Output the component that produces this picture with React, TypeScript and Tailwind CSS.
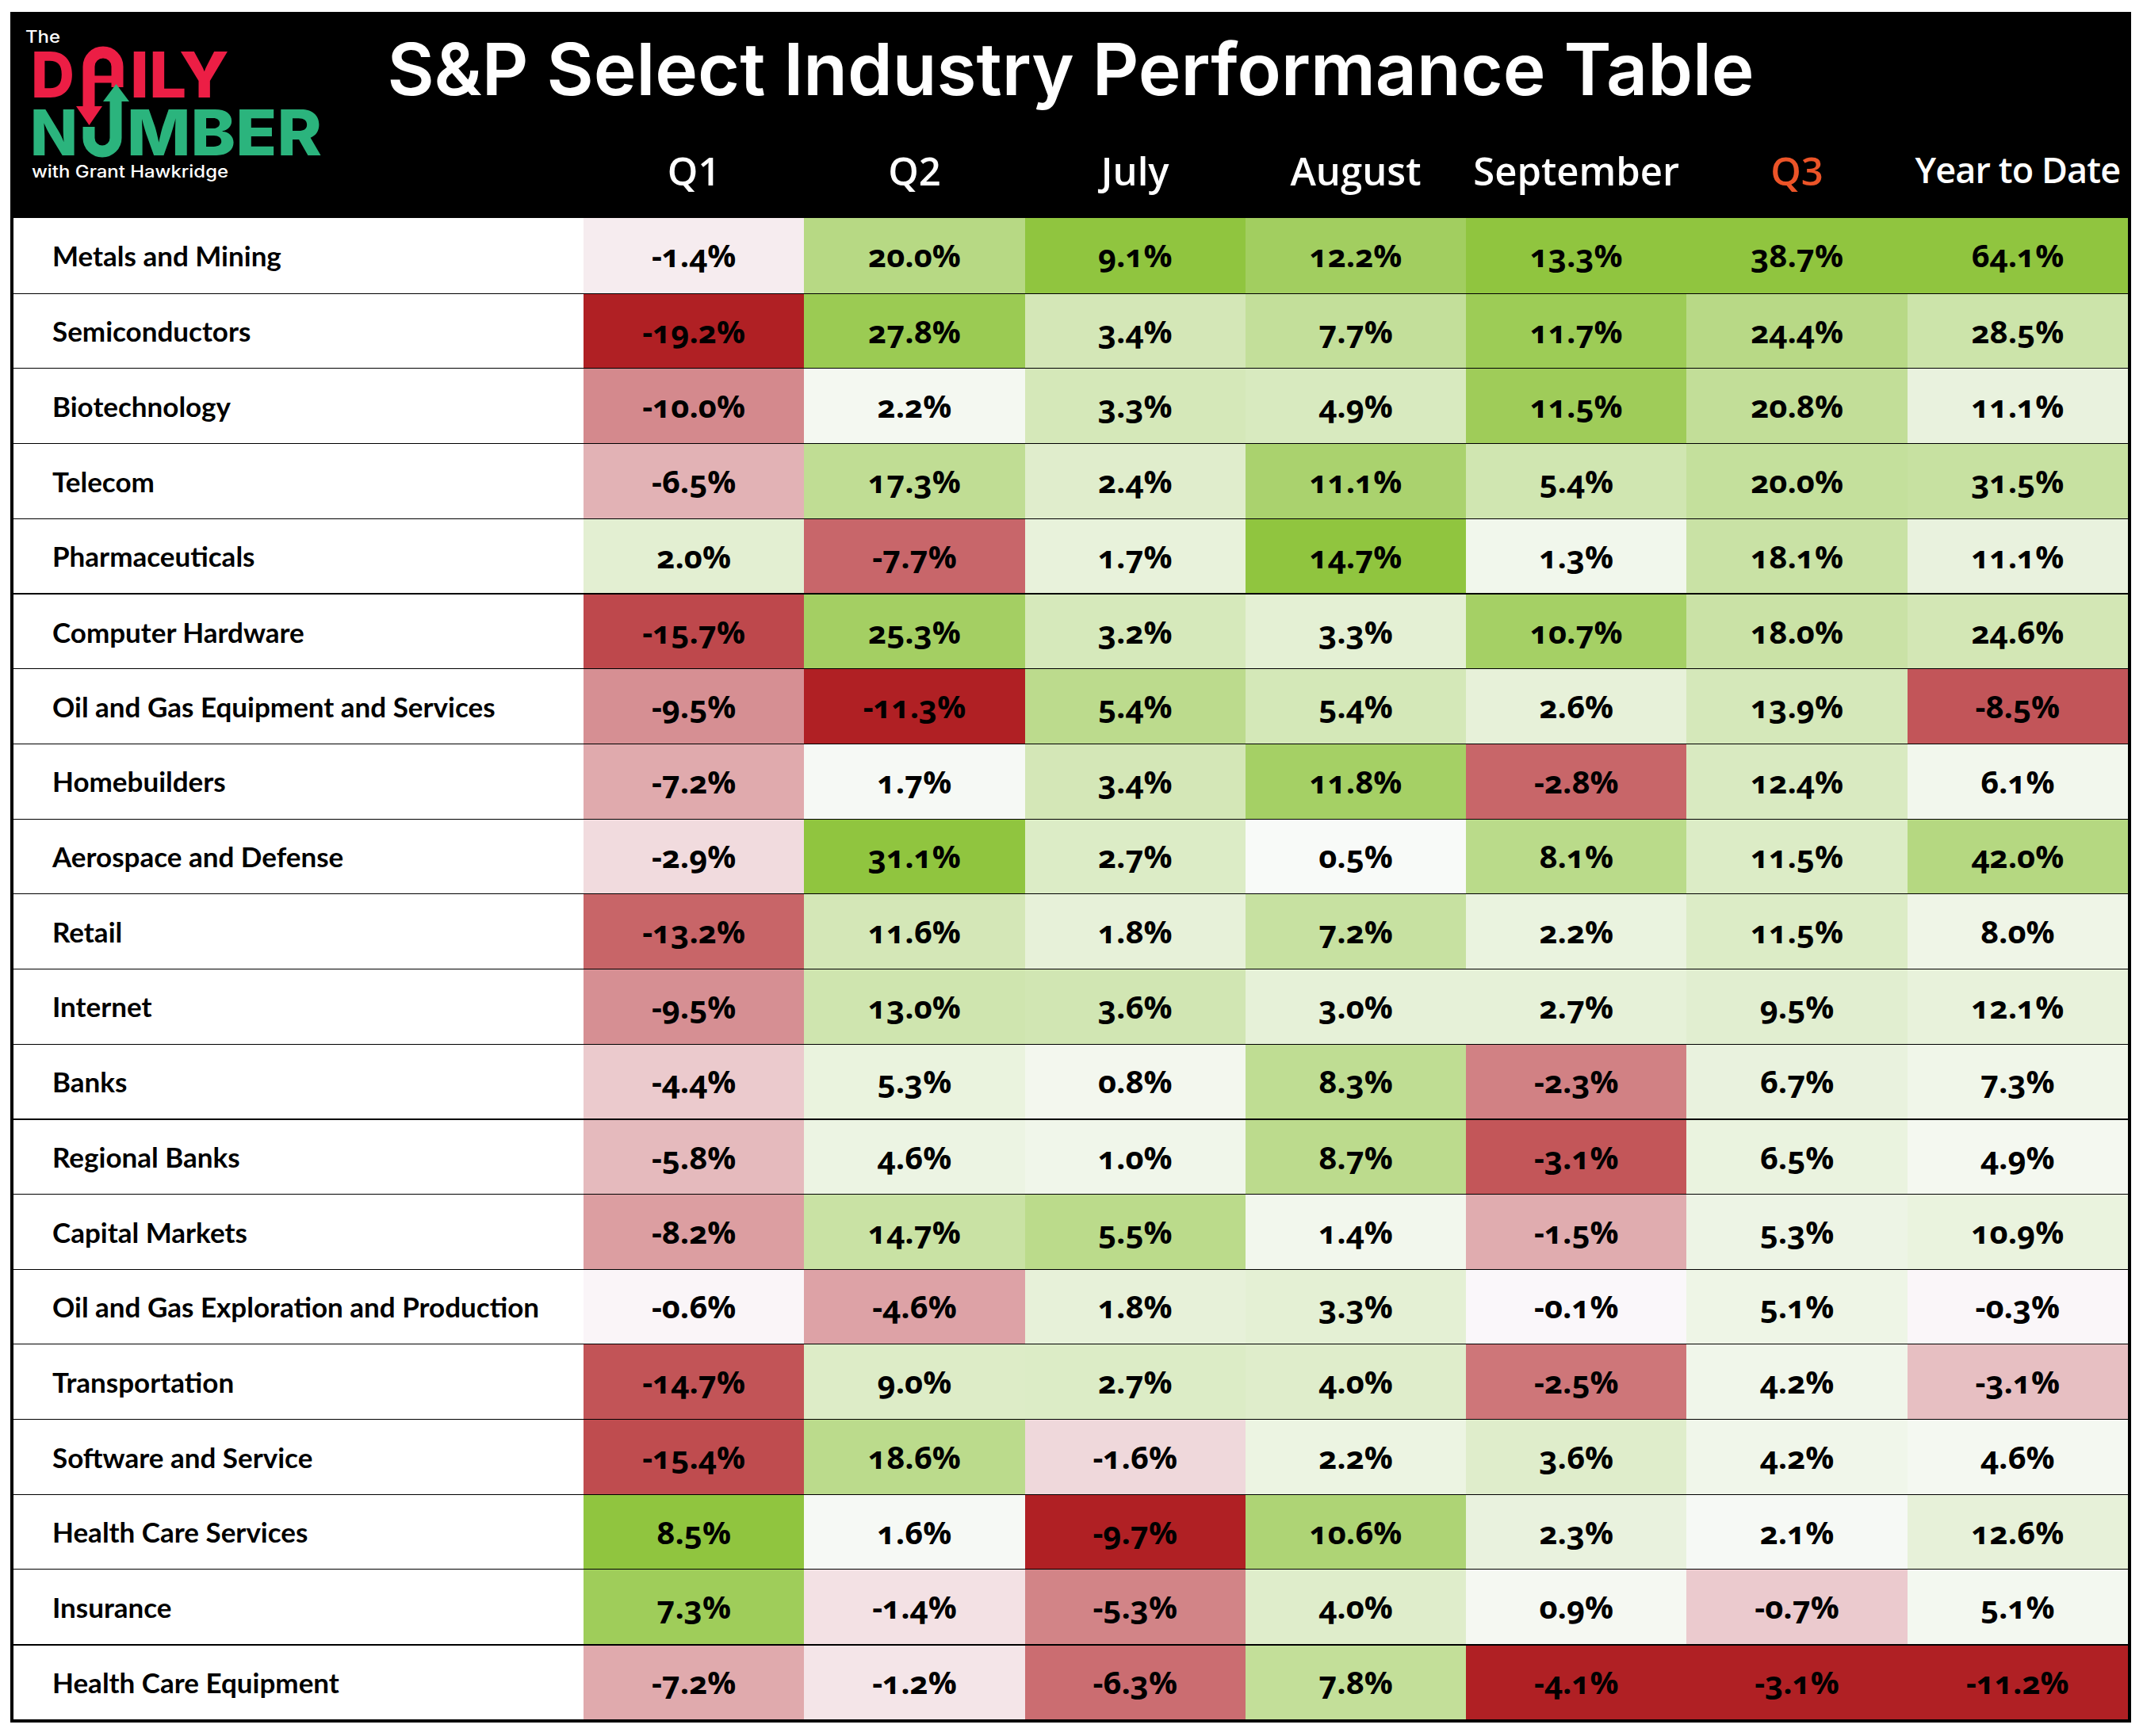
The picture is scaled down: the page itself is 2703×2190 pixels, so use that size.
import React from 'react';

type Row = { name: string; values: number[] };

const rows: Row[] = [
  { name: 'Metals and Mining', values: [-1.4, 20.0, 9.1, 12.2, 13.3, 38.7, 64.1] },
  { name: 'Semiconductors', values: [-19.2, 27.8, 3.4, 7.7, 11.7, 24.4, 28.5] },
  { name: 'Biotechnology', values: [-10.0, 2.2, 3.3, 4.9, 11.5, 20.8, 11.1] },
  { name: 'Telecom', values: [-6.5, 17.3, 2.4, 11.1, 5.4, 20.0, 31.5] },
  { name: 'Pharmaceuticals', values: [2.0, -7.7, 1.7, 14.7, 1.3, 18.1, 11.1] },
  { name: 'Computer Hardware', values: [-15.7, 25.3, 3.2, 3.3, 10.7, 18.0, 24.6] },
  { name: 'Oil and Gas Equipment and Services', values: [-9.5, -11.3, 5.4, 5.4, 2.6, 13.9, -8.5] },
  { name: 'Homebuilders', values: [-7.2, 1.7, 3.4, 11.8, -2.8, 12.4, 6.1] },
  { name: 'Aerospace and Defense', values: [-2.9, 31.1, 2.7, 0.5, 8.1, 11.5, 42.0] },
  { name: 'Retail', values: [-13.2, 11.6, 1.8, 7.2, 2.2, 11.5, 8.0] },
  { name: 'Internet', values: [-9.5, 13.0, 3.6, 3.0, 2.7, 9.5, 12.1] },
  { name: 'Banks', values: [-4.4, 5.3, 0.8, 8.3, -2.3, 6.7, 7.3] },
  { name: 'Regional Banks', values: [-5.8, 4.6, 1.0, 8.7, -3.1, 6.5, 4.9] },
  { name: 'Capital Markets', values: [-8.2, 14.7, 5.5, 1.4, -1.5, 5.3, 10.9] },
  { name: 'Oil and Gas Exploration and Production', values: [-0.6, -4.6, 1.8, 3.3, -0.1, 5.1, -0.3] },
  { name: 'Transportation', values: [-14.7, 9.0, 2.7, 4.0, -2.5, 4.2, -3.1] },
  { name: 'Software and Service', values: [-15.4, 18.6, -1.6, 2.2, 3.6, 4.2, 4.6] },
  { name: 'Health Care Services', values: [8.5, 1.6, -9.7, 10.6, 2.3, 2.1, 12.6] },
  { name: 'Insurance', values: [7.3, -1.4, -5.3, 4.0, 0.9, -0.7, 5.1] },
  { name: 'Health Care Equipment', values: [-7.2, -1.2, -6.3, 7.8, -4.1, -3.1, -11.2] },
];

const columns = ['Q1', 'Q2', 'July', 'August', 'September', 'Q3', 'Year to Date'];

// rows that get a heavier rule above them
const thickAbove = [5, 12, 19];

const WHITE = [252, 252, 255];
const RED = [176, 32, 36];
const GREEN = [144, 197, 63];

const colMin = columns.map((_, c) => Math.min(...rows.map(r => r.values[c])));
const colMax = columns.map((_, c) => Math.max(...rows.map(r => r.values[c])));

function cellColor(v: number, c: number) {
  const end = v >= 0 ? GREEN : RED;
  const t = v >= 0 ? v / colMax[c] : v / colMin[c];
  const mix = WHITE.map((w, i) => Math.round(w + (end[i] - w) * t));
  return `rgb(${mix[0]}, ${mix[1]}, ${mix[2]})`;
}

const Logo = () => (
  <svg className="absolute left-0 top-0" width="430" height="260" viewBox="13 15 430 260">
    <g fontFamily="Inter, 'Open Sans', sans-serif">
      <text x="32" y="54" fontSize="21" fontWeight="500" fill="#fff" textLength="44" lengthAdjust="spacingAndGlyphs">The</text>
      <text x="39" y="123" fontSize="80" fontWeight="800" fill="#EC1E45" textLength="55" lengthAdjust="spacingAndGlyphs">D</text>
      <text x="164" y="123" fontSize="80" fontWeight="800" fill="#EC1E45" textLength="125" lengthAdjust="spacingAndGlyphs">ILY</text>
      <text x="38" y="196" fontSize="80" fontWeight="800" fill="#2BB47D" textLength="60" lengthAdjust="spacingAndGlyphs">N</text>
      <text x="160" y="196" fontSize="80" fontWeight="800" fill="#2BB47D" textLength="246" lengthAdjust="spacingAndGlyphs">MBER</text>
      <text x="40" y="224" fontSize="21" fontWeight="500" fill="#fff" textLength="248" lengthAdjust="spacingAndGlyphs">with Grant Hawkridge</text>
    </g>
    {/* the A loop turning into a down arrow */}
    <path d="M112 137 V84 A18 18 0 0 1 148 84 V110" stroke="#EC1E45" strokeWidth="15" fill="none" />
    <path d="M112 100 H148" stroke="#EC1E45" strokeWidth="9" />
    <polygon points="96,134 129,134 112.5,158" fill="#EC1E45" />
    {/* the U rising into an up arrow */}
    <path d="M112 160 V174 A17 17 0 0 0 146 174 V126" stroke="#2BB47D" strokeWidth="15" fill="none" />
    <polygon points="130,128 163,128 146.5,106" fill="#2BB47D" />
  </svg>
);

export default function App() {
  return (
    <div className="min-h-screen bg-white pl-[13px] pt-[15px]">
      <div className="w-[2675px]">
        <header className="relative h-[260px] bg-black">
          <Logo />
          <h1 className="pt-[27px] text-center text-[91px] font-semibold leading-none text-white font-['Inter',sans-serif]">
            S&amp;P Select Industry Performance Table
          </h1>
          <div className="mt-[58px] grid grid-cols-[719px_repeat(7,minmax(0,1fr))] px-[4px] font-['Open_Sans',sans-serif] text-[49px] font-semibold leading-none">
            <div />
            {columns.map(c => (
              <div
                key={c}
                className={
                  c === 'Q3'
                    ? 'whitespace-nowrap text-center text-[#EC5428]'
                    : c === 'Year to Date'
                      ? 'whitespace-nowrap text-center text-[45px] tracking-[-0.02em] text-white'
                      : 'whitespace-nowrap text-center text-white'
                }
              >
                {c}
              </div>
            ))}
          </div>
        </header>

        <div className="border-x-4 border-b-4 border-black">
          {rows.map((r, i) => (
            <div
              key={r.name}
              className={
                'grid h-[94.7px] grid-cols-[719px_repeat(7,minmax(0,1fr))] ' +
                (i === 0 ? '' : thickAbove.includes(i) ? 'border-t-2 border-black' : 'border-t border-black')
              }
            >
              <div className="flex items-center whitespace-nowrap bg-white pl-[49px] font-['Lato',sans-serif] text-[35px] font-bold text-black">
                {r.name}
              </div>
              {r.values.map((v, c) => (
                <div
                  key={c}
                  className="flex items-center justify-center font-['Open_Sans',sans-serif] text-[40px] font-bold text-black oldstyle-nums"
                  style={{ backgroundColor: cellColor(v, c) }}
                >
                  {v.toFixed(1)}%
                </div>
              ))}
            </div>
          ))}
        </div>
      </div>
    </div>
  );
}
